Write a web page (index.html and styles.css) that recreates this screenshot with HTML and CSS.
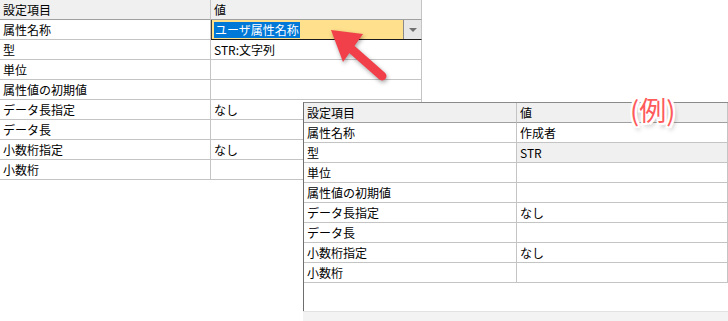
FILE: index.html
```html
<!DOCTYPE html>
<html>
<head>
    <title>属性設定</title>
    <link rel="stylesheet" href="styles.css">
</head>
<body>
    <div class="sheet">
        <div class="grid grid-main">
            <div class="cell head">設定項目</div>
            <div class="cell head">値</div>
            <div class="cell">属性名称</div>
            <div class="cell combo">
                <span class="combo-field"><span class="selected">ユーザ属性名称</span></span>
                <span class="combo-btn"><span class="caret"></span></span>
            </div>
            <div class="cell">型</div>
            <div class="cell">STR:文字列</div>
            <div class="cell">単位</div>
            <div class="cell"></div>
            <div class="cell">属性値の初期値</div>
            <div class="cell"></div>
            <div class="cell">データ長指定</div>
            <div class="cell">なし</div>
            <div class="cell">データ長</div>
            <div class="cell"></div>
            <div class="cell">小数桁指定</div>
            <div class="cell">なし</div>
            <div class="cell">小数桁</div>
            <div class="cell"></div>
        </div>

        <div class="sample">
            <div class="grid grid-sample">
                <div class="cell head">設定項目</div>
                <div class="cell head">値</div>
                <div class="cell">属性名称</div>
                <div class="cell">作成者</div>
                <div class="cell">型</div>
                <div class="cell current">STR</div>
                <div class="cell">単位</div>
                <div class="cell"></div>
                <div class="cell">属性値の初期値</div>
                <div class="cell"></div>
                <div class="cell">データ長指定</div>
                <div class="cell">なし</div>
                <div class="cell">データ長</div>
                <div class="cell"></div>
                <div class="cell">小数桁指定</div>
                <div class="cell">なし</div>
                <div class="cell">小数桁</div>
                <div class="cell"></div>
            </div>
            <div class="sample-space"></div>
            <div class="sample-foot"></div>
        </div>

        <div class="note">(例)</div>

        <svg class="arrow" width="80" height="75" viewBox="0 0 80 75">
            <line x1="62" y1="56" x2="28" y2="26" stroke="#f2404a" stroke-width="9" stroke-linecap="round"/>
            <polygon points="11,10 43,14 23,42" fill="#f2404a"/>
        </svg>
    </div>
</body>
</html>
```

FILE: styles.css
```css
* {
    box-sizing: border-box;
}

body {
    margin: 0;
    background-color: #ffffff;
    font-family: 'Noto Sans CJK JP', 'Noto Sans', sans-serif;
    font-size: 12px;
    color: #000000;
}

.sheet {
    position: relative;
    width: 728px;
    height: 321px;
    overflow: hidden;
}

.grid {
    display: grid;
}

.grid-main {
    grid-template-columns: 211px 211px;
}

.grid-sample {
    grid-template-columns: 213px 211px;
}

.cell {
    height: 20px;
    padding: 0 3px;
    line-height: 19px;
    white-space: nowrap;
    border-right: 1px solid #c4c4c4;
    border-bottom: 1px solid #c4c4c4;
}

.head {
    background-color: #f0f0f0;
    border-bottom-color: #a0a0a0;
}

.current {
    background-color: #f0f0f0;
}

/* drop-down in edit mode */
.combo {
    display: flex;
    padding: 0;
    border-bottom: 1px solid #1a1a1a;
}

.combo-field {
    flex: 1;
    padding: 1px 2px 0;
    background-color: #ffe08c;
    border-left: 1px solid #404040;
    border-right: 1px solid #8a8a8a;
    line-height: 17px;
}

.selected {
    display: inline-block;
    padding: 0 1px;
    background-color: #0078d7;
    color: #ffffff;
    line-height: 16px;
}

.combo-btn {
    width: 17px;
    display: flex;
    align-items: center;
    justify-content: center;
    background-color: #e6e6e6;
}

.caret {
    width: 0;
    height: 0;
    border-left: 4px solid transparent;
    border-right: 4px solid transparent;
    border-top: 4px solid #707070;
}

/* example window lying over the grid */
.sample {
    position: absolute;
    left: 303px;
    top: 102px;
    width: 425px;
    height: 219px;
    display: flex;
    flex-direction: column;
    background-color: #ffffff;
    border-left: 1px solid #6e6e6e;
    border-top: 1px solid #8a8a8a;
}

.sample-space {
    flex: 1;
}

.sample-foot {
    height: 10px;
    margin-left: -1px;
    background-color: #f3f3f3;
    border-top: 1px solid #e2e2e2;
}

.note {
    position: absolute;
    left: 630px;
    top: 93px;
    font-size: 27px;
    line-height: 34px;
    color: #ff5b5b;
    text-shadow: -2px 0 0 #fff, 2px 0 0 #fff, 0 -2px 0 #fff, 0 2px 0 #fff,
        -2px -2px 0 #fff, 2px 2px 0 #fff, -2px 2px 0 #fff, 2px -2px 0 #fff,
        2px 4px 4px rgba(0, 0, 0, 0.35);
}

.arrow {
    position: absolute;
    left: 320px;
    top: 20px;
    filter: drop-shadow(1px 2px 2px rgba(0, 0, 0, 0.35));
}
```
